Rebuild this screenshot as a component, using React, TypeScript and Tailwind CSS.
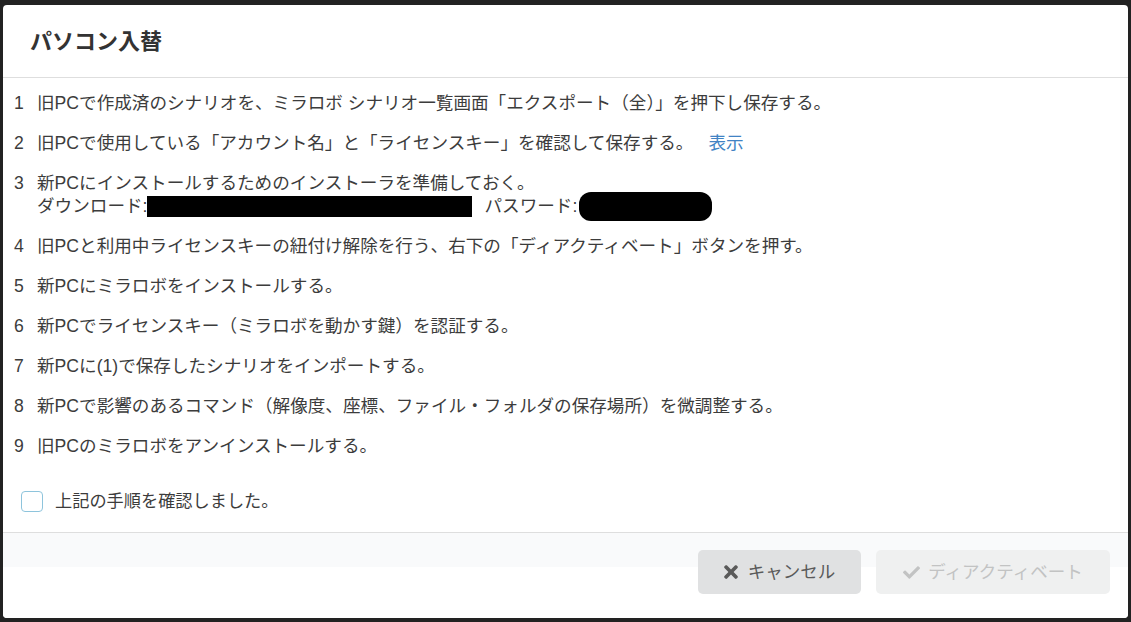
import { FaTimes, FaCheck } from 'react-icons/fa';

const font = { fontFamily: '"Liberation Sans", "Noto Sans CJK JP", sans-serif' };

const steps: React.ReactNode[] = [
  '旧PCで作成済のシナリオを、ミラロボ シナリオ一覧画面「エクスポート（全）」を押下し保存する。',
  <>
    旧PCで使用している「アカウント名」と「ライセンスキー」を確認して保存する。
    <a className="ml-[15px] text-[#4183c4] cursor-pointer">表示</a>
  </>,
  <>
    <div>新PCにインストールするためのインストーラを準備しておく。</div>
    <div className="flex items-center h-[23px]">
      <span>ダウンロード:</span>
      <span className="inline-block w-[325px] h-[21px] bg-black" />
      <span className="ml-[12px]">パスワード:</span>
      <span className="inline-block w-[133px] h-[29px] ml-[2px] bg-black rounded-[12px]" />
    </div>
  </>,
  '旧PCと利用中ライセンスキーの紐付け解除を行う、右下の「ディアクティベート」ボタンを押す。',
  '新PCにミラロボをインストールする。',
  '新PCでライセンスキー（ミラロボを動かす鍵）を認証する。',
  '新PCに(1)で保存したシナリオをインポートする。',
  '新PCで影響のあるコマンド（解像度、座標、ファイル・フォルダの保存場所）を微調整する。',
  '旧PCのミラロボをアンインストールする。',
];

export default function App() {
  return (
    <div className="h-[622px] w-[1131px] bg-[#222] pt-[5px] px-[3px] pb-[4px]" style={font}>
      <div className="h-full bg-white rounded-[4px] flex flex-col overflow-hidden">
        <div className="h-[73px] flex-none flex items-center px-[27px] border-b border-[#dedede]">
          <h1 className="text-[22px] font-bold text-[#333]">パソコン入替</h1>
        </div>

        <div className="flex-1 pt-[14px] pl-[11px] text-[17.6px] leading-[23px] text-[#3c3c3c]">
          <ol className="flex flex-col gap-[17px]">
            {steps.map((s, i) => (
              <li key={i} className="flex">
                <span className="w-[23px] flex-none">{i + 1}</span>
                <div>{s}</div>
              </li>
            ))}
          </ol>
          <label className="flex items-center mt-[32px] ml-[7px]">
            <span className="w-[22px] h-[21px] border border-[#8ec4dc] rounded-[4px] bg-white" />
            <span className="ml-[12px] text-[17.2px]">上記の手順を確認しました。</span>
          </label>
        </div>

        <div className="h-[86px] flex-none border-t border-[#dedede] bg-[linear-gradient(#f9fafb_0_34px,#ffffff_34px)] flex justify-end items-start pt-[17px] pr-[18px] gap-[15px]">
          <button className="h-[44px] w-[163px] rounded-[5px] bg-[#e0e1e2] text-[#5a5a5a] text-[17.5px] flex items-center justify-center gap-[10px]">
            <FaTimes className="w-[14px] h-[20px]" />
            キャンセル
          </button>
          <button disabled className="h-[44px] w-[234px] rounded-[5px] bg-[#eff0f0] text-[#c2c3c3] text-[17.5px] flex items-center justify-center gap-[8px]">
            <FaCheck className="w-[17px] h-[17px]" />
            ディアクティベート
          </button>
        </div>
      </div>
    </div>
  );
}
